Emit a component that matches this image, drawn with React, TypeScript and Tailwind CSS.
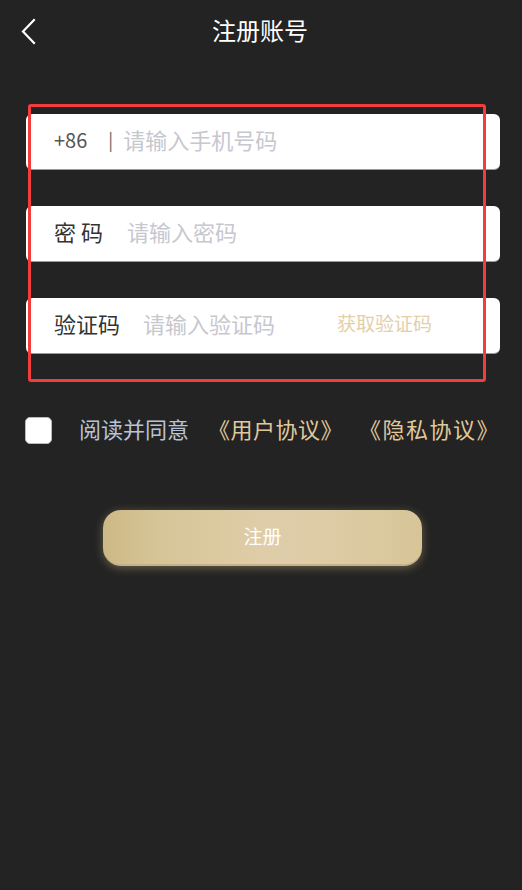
import { useState } from 'react'

const font = { fontFamily: '"Noto Sans CJK SC", "Noto Sans", sans-serif' }

function Field({ children }: { children: React.ReactNode }) {
  return (
    <div className="h-[56px] bg-white rounded-[6px] border-b border-[#9a9a9a] flex items-center pl-[28px] pr-[20px] pb-[4px]">
      {children}
    </div>
  )
}

export default function App() {
  const [agreed, setAgreed] = useState(false)

  return (
    <div className="w-[522px] h-[890px] bg-[#232323] relative" style={font}>
      {/* Header */}
      <div className="h-[64px] flex items-center justify-center relative">
        <button className="absolute left-[20px] top-[18px] w-[18px] h-[28px]">
          <svg width="18" height="28" viewBox="0 0 18 28" fill="none">
            <path d="M14 2 L3 13.5 L14 25" stroke="white" strokeWidth="2.2" strokeLinecap="square" />
          </svg>
        </button>
        <h1 className="text-white text-[24px] leading-none -mt-[4px] pr-[2px]">注册账号</h1>
      </div>

      {/* Form */}
      <div className="px-[26px] pr-[22px] mt-[50px] flex flex-col gap-[36px]">
        <Field>
          <span className="text-[#555] text-[20px]">+86</span>
          <span className="text-[#666] text-[18px] ml-[21px] mr-[10px]">|</span>
          <span className="text-[#c6c7cf] text-[22px]">请输入手机号码</span>
        </Field>
        <Field>
          <span className="text-[#333] text-[22px] tracking-[5px]">密码</span>
          <span className="text-[#c6c7cf] text-[22px] ml-[19px]">请输入密码</span>
        </Field>
        <Field>
          <span className="text-[#333] text-[22px]">验证码</span>
          <span className="text-[#c6c7cf] text-[22px] ml-[23px]">请输入验证码</span>
          <span className="text-[#e3cfa8] text-[19px] ml-[62px]">获取验证码</span>
        </Field>
      </div>

      {/* Annotation box */}
      <div className="absolute left-[28px] top-[104px] w-[458px] h-[278px] border-[3px] border-[#f23d3d] rounded-[3px] pointer-events-none" />

      {/* Agreement */}
      <div className="flex items-center mt-[62px] pl-[25px]">
        <button
          onClick={() => setAgreed(!agreed)}
          className="w-[27px] h-[27px] bg-white rounded-[5px] border border-[#bbb]"
        />
        <span className="text-[#b8c3d6] text-[22px] ml-[27px] -mt-[4px]">阅读并同意</span>
        <span className="text-[#e0c99b] text-[22px] ml-[19px] -mt-[4px] tracking-[0.5px]">《用户协议》</span>
        <span className="text-[#e0c99b] text-[22px] ml-[16px] -mt-[4px] tracking-[1.5px]">《隐私协议》</span>
      </div>

      {/* Submit */}
      <div className="flex justify-center mt-[65px] pl-[3px]">
        <button className="w-[319px] h-[56px] rounded-[18px] text-white text-[19px] pb-[2px] bg-[linear-gradient(90deg,#cdb986_0%,#d6c597_18%,#dfcda9_50%,#decca7_70%,#d7c598_100%)] shadow-[0_2px_10px_rgba(232,210,150,0.35)] border-b-2 border-[#c3b287]">
          注册
        </button>
      </div>
    </div>
  )
}
